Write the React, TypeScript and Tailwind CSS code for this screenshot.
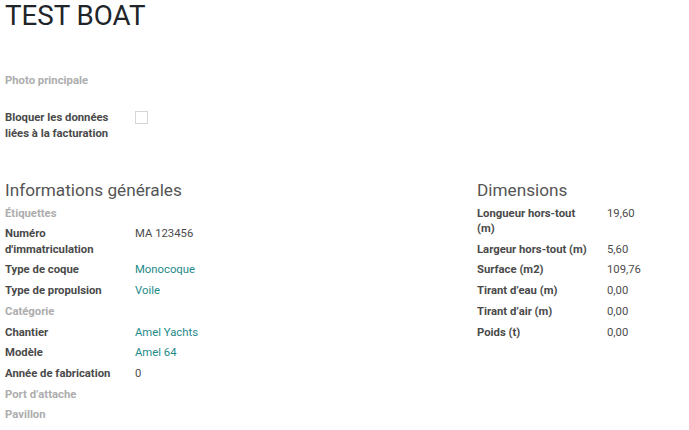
const generalRows: { label: string; value?: string; link?: boolean; muted?: boolean }[] = [
  { label: 'Étiquettes', muted: true },
  { label: "Numéro d'immatriculation", value: 'MA 123456' },
  { label: 'Type de coque', value: 'Monocoque', link: true },
  { label: 'Type de propulsion', value: 'Voile', link: true },
  { label: 'Catégorie', muted: true },
  { label: 'Chantier', value: 'Amel Yachts', link: true },
  { label: 'Modèle', value: 'Amel 64', link: true },
  { label: 'Année de fabrication', value: '0' },
  { label: 'Port d’attache', muted: true },
  { label: 'Pavillon', muted: true },
]

const dimensionRows: { label: string; value: string }[] = [
  { label: 'Longueur hors-tout (m)', value: '19,60' },
  { label: 'Largeur hors-tout (m)', value: '5,60' },
  { label: 'Surface (m2)', value: '109,76' },
  { label: 'Tirant d’eau (m)', value: '0,00' },
  { label: 'Tirant d’air (m)', value: '0,00' },
  { label: 'Poids (t)', value: '0,00' },
]

function Row({ label, value, link, muted }: { label: string; value?: string; link?: boolean; muted?: boolean }) {
  return (
    <div className="flex py-[2.6px] text-[11.3px] leading-[15.5px]">
      <div className={`w-[130px] shrink-0 pr-3 font-bold ${muted ? 'text-[#adadad]' : 'text-[#4a4a4a]'}`}>
        {label}
      </div>
      {value && <div className={link ? 'text-[#1d8a89]' : 'text-[#4c4c4c]'}>{value}</div>}
    </div>
  )
}

export default function App() {
  return (
    <div className="w-[689px] h-[430px] overflow-hidden bg-white px-[5px] font-['Roboto',sans-serif]">
      <h1 className="text-[27.7px] leading-[32px] text-[#212529] font-normal">TEST BOAT</h1>

      <div className="mt-[41px] text-[11.3px] leading-[15.5px] font-bold text-[#adadad]">Photo principale</div>

      <div className="mt-[21px] flex text-[11.3px] leading-[16px]">
        <div className="w-[130px] shrink-0 pr-3 font-bold text-[#4a4a4a]">
          Bloquer les données liées à la facturation
        </div>
        <div className="mt-[1px] h-[13px] w-[13px] border border-[#d6d6d6] bg-white" />
      </div>

      <div className="mt-[37px] flex">
        <div className="w-[472px] shrink-0">
          <h2 className="text-[17.2px] leading-[22px] text-[#555]">Informations générales</h2>
          <div className="mt-[2.5px]">
            {generalRows.map((r) => (
              <Row key={r.label} {...r} />
            ))}
          </div>
        </div>
        <div className="flex-1">
          <h2 className="text-[17.2px] leading-[22px] text-[#555]">Dimensions</h2>
          <div className="mt-[2.5px]">
            {dimensionRows.map((r) => (
              <Row key={r.label} {...r} />
            ))}
          </div>
        </div>
      </div>
    </div>
  )
}
